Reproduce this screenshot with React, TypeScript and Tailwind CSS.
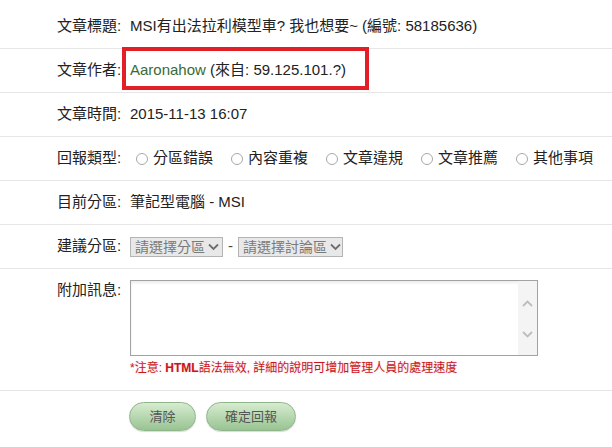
import React from "react";

const FONT = { fontFamily: '"Liberation Sans", Arial, "Noto Sans CJK TC", sans-serif' };

function Row({ label, children, className = "" }: { label: string; children?: React.ReactNode; className?: string }) {
  return (
    <div className={`relative flex h-[44px] items-center whitespace-nowrap border-b border-[#e6e6e6] ${className}`}>
      <div className="w-[130px] shrink-0 pl-[57px] text-[#222]">{label}</div>
      <div className="flex shrink-0 items-center text-[#222]">{children}</div>
    </div>
  );
}

function Radio({ text, last = false }: { text: string; last?: boolean }) {
  return (
    <div className={`flex shrink-0 items-center ${last ? "" : "mr-[18px]"}`}>
      <span className="mr-[5px] inline-block h-[12px] w-[12px] rounded-full border border-[#a8a8a8] bg-white" />
      <span className="whitespace-nowrap">{text}</span>
    </div>
  );
}

function Chevron() {
  return (
    <svg width="11" height="8" viewBox="0 0 11 8" className="ml-[3px] shrink-0">
      <path d="M1 1.5 L5.5 6 L10 1.5" fill="none" stroke="#6e6e6e" strokeWidth="1.8" />
    </svg>
  );
}

function FakeSelect({ text, w }: { text: string; w: string }) {
  return (
    <div className={`flex h-[20px] shrink-0 items-center whitespace-nowrap border border-[#b4b4b4] bg-[#e8e8e8] pl-[4px] text-[14px] leading-none text-[#7a7a7a] ${w}`}>
      <span>{text}</span>
      <Chevron />
    </div>
  );
}

export default function App() {
  return (
    <div className="h-[447px] w-[612px] overflow-hidden bg-white pt-[5px] text-[15px]" style={FONT}>
      <Row label="文章標題:">MSI有出法拉利模型車? 我也想要~ (編號: 58185636)</Row>
      <Row label="文章作者:">
        <span className="text-[#3b6a36]">Aaronahow</span>
        <span>&nbsp;(來自: 59.125.101.?)</span>
        <div className="pointer-events-none absolute left-[122px] top-[-2px] h-[43px] w-[247px] border-[4px] border-[#e21f26]" />
      </Row>
      <Row label="文章時間:">2015-11-13 16:07</Row>
      <Row label="回報類型:">
        <div className="ml-[6px] flex shrink-0 items-center">
          <Radio text="分區錯誤" />
          <Radio text="內容重複" />
          <Radio text="文章違規" />
          <Radio text="文章推薦" />
          <Radio text="其他事項" last />
        </div>
      </Row>
      <Row label="目前分區:">筆記型電腦 - MSI</Row>
      <Row label="建議分區:">
        <FakeSelect text="請選擇分區" w="w-[93px]" />
        <span className="mx-[5px] text-[#444]">-</span>
        <FakeSelect text="請選擇討論區" w="w-[105px]" />
      </Row>
      <div className="flex border-b border-[#e6e6e6] pb-[15px] pt-[11px]">
        <div className="w-[130px] shrink-0 pl-[57px] leading-[20px] text-[#222]">附加訊息:</div>
        <div className="flex flex-col">
          <div className="relative h-[76px] w-[408px] border border-[#a2a2a2] bg-white shadow-[inset_0_2px_3px_rgba(0,0,0,0.08)]">
            <div className="absolute bottom-0 right-0 top-0 flex w-[19px] flex-col items-center justify-between bg-[#f4f4f4] pb-[17px] pt-[19px]">
              <svg width="11" height="7" viewBox="0 0 11 7">
                <path d="M1 6 L5.5 1.5 L10 6" fill="none" stroke="#bdbdbd" strokeWidth="1.8" />
              </svg>
              <svg width="11" height="7" viewBox="0 0 11 7">
                <path d="M1 1 L5.5 5.5 L10 1" fill="none" stroke="#bdbdbd" strokeWidth="1.8" />
              </svg>
            </div>
          </div>
          <div className="mt-[5px] whitespace-nowrap text-[12px] leading-[14px] text-[#c8161d] [text-shadow:0_0_2px_rgba(230,120,120,0.35)]">
            *注意: <span className="font-bold">HTML</span>語法無效, 詳細的說明可增加管理人員的處理速度
          </div>
        </div>
      </div>
      <div className="flex gap-[10px] pl-[129px] pt-[11px]">
        <button className="h-[29px] w-[67px] rounded-full border border-[#8fb58a] bg-linear-to-b from-[#d6ecd0] to-[#99c393] text-[13px] text-[#555] shadow-[0_1px_1px_rgba(0,0,0,0.15)]">
          清除
        </button>
        <button className="h-[29px] w-[90px] rounded-full border border-[#8fb58a] bg-linear-to-b from-[#d6ecd0] to-[#99c393] text-[13px] text-[#555] shadow-[0_1px_1px_rgba(0,0,0,0.15)]">
          確定回報
        </button>
      </div>
    </div>
  );
}
